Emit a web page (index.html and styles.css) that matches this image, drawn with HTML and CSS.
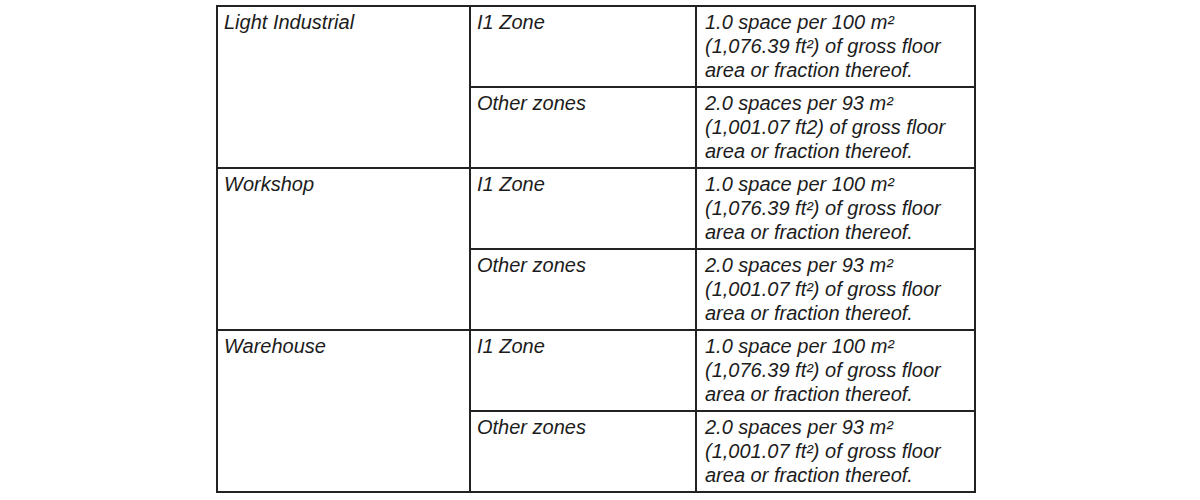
FILE: index.html
```html
<!DOCTYPE html>
<html>
<head>
<meta charset="utf-8">
<link rel="stylesheet" href="styles.css">
</head>
<body>
<table class="parking">
  <colgroup>
    <col class="c-use">
    <col class="c-zone">
    <col class="c-req">
  </colgroup>
  <tr>
    <td class="use" rowspan="2">Light Industrial</td>
    <td class="zone">I1 Zone</td>
    <td class="req">1.0 space per 100 m²<br>(1,076.39 ft²) of gross floor<br>area or fraction thereof.</td>
  </tr>
  <tr>
    <td class="zone">Other zones</td>
    <td class="req">2.0 spaces per 93 m²<br>(1,001.07 ft2) of gross floor<br>area or fraction thereof.</td>
  </tr>
  <tr>
    <td class="use" rowspan="2">Workshop</td>
    <td class="zone">I1 Zone</td>
    <td class="req">1.0 space per 100 m²<br>(1,076.39 ft²) of gross floor<br>area or fraction thereof.</td>
  </tr>
  <tr>
    <td class="zone">Other zones</td>
    <td class="req">2.0 spaces per 93 m²<br>(1,001.07 ft²) of gross floor<br>area or fraction thereof.</td>
  </tr>
  <tr>
    <td class="use" rowspan="2">Warehouse</td>
    <td class="zone">I1 Zone</td>
    <td class="req">1.0 space per 100 m²<br>(1,076.39 ft²) of gross floor<br>area or fraction thereof.</td>
  </tr>
  <tr>
    <td class="zone">Other zones</td>
    <td class="req">2.0 spaces per 93 m²<br>(1,001.07 ft²) of gross floor<br>area or fraction thereof.</td>
  </tr>
</table>
</body>
</html>
```
FILE: styles.css
```css
html, body {
  margin: 0;
  padding: 0;
  background: #ffffff;
}

.parking {
  margin: 5px 0 0 216px;
  width: 760px;
  border-collapse: collapse;
  table-layout: fixed;
  font-family: "Liberation Sans", Arial, sans-serif;
  font-style: italic;
  font-size: 20px;
  line-height: 24px;
  color: #1c1c1c;
}

.c-use { width: 253px; }
.c-zone { width: 226px; }
.c-req { width: 279px; }

.parking tr {
  height: 81px;
}

.parking td {
  border: 2px solid #222222;
  vertical-align: top;
  padding: 3px 6px 0 6px;
  white-space: nowrap;
}

.parking td.req {
  padding-left: 8px;
}
```
